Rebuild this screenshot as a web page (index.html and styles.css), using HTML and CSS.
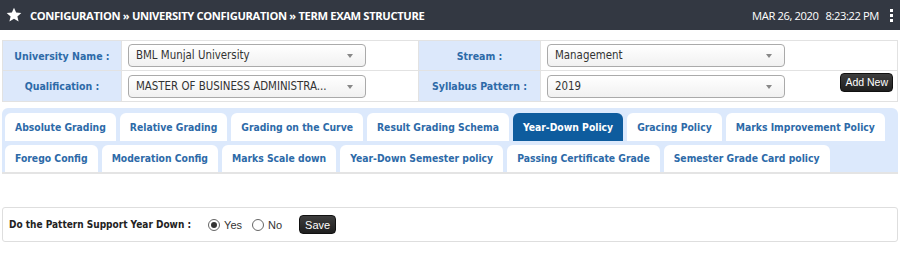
FILE: index.html
```html
<!DOCTYPE html>
<html lang="en">
  <head>
    <meta charset="UTF-8" />
    <title>Term Exam Structure</title>
    <link rel="stylesheet" href="styles.css">
  </head>
  <body>
    <div class="top-bar">
      <div class="crumbs">
        <svg class="star" viewBox="0 0 24 24" width="16" height="16">
          <path d="M12 1l3.2 7.2 7.8.7-5.9 5.2 1.8 7.7L12 17.8l-6.9 4 1.8-7.7L1 8.9l7.8-.7z" fill="#fff" />
        </svg>
        <span>CONFIGURATION » UNIVERSITY CONFIGURATION » TERM EXAM STRUCTURE</span>
      </div>
      <div class="clock">
        <span>MAR 26, 2020</span>
        <span>8:23:22 PM</span>
        <span class="kebab"><i></i><i></i><i></i></span>
      </div>
    </div>

    <div class="page">
      <div class="filter-grid">
        <div class="label">University Name :</div>
        <div class="field">
          <div class="select">BML Munjal University</div>
        </div>
        <div class="label">Stream :</div>
        <div class="field">
          <div class="select">Management</div>
        </div>

        <div class="label">Qualification :</div>
        <div class="field">
          <div class="select">MASTER OF BUSINESS ADMINISTRA...</div>
        </div>
        <div class="label">Syllabus Pattern :</div>
        <div class="field field-last">
          <div class="select">2019</div>
          <button class="btn-dark btn-add">Add New</button>
        </div>
      </div>

      <div class="tabs">
        <div class="tab-row">
          <a class="tab">Absolute Grading</a>
          <a class="tab">Relative Grading</a>
          <a class="tab">Grading on the Curve</a>
          <a class="tab">Result Grading Schema</a>
          <a class="tab active">Year-Down Policy</a>
          <a class="tab">Gracing Policy</a>
          <a class="tab">Marks Improvement Policy</a>
        </div>
        <div class="tab-row">
          <a class="tab">Forego Config</a>
          <a class="tab">Moderation Config</a>
          <a class="tab">Marks Scale down</a>
          <a class="tab">Year-Down Semester policy</a>
          <a class="tab">Passing Certificate Grade</a>
          <a class="tab">Semester Grade Card policy</a>
        </div>
      </div>

      <div class="panel">
        <span class="question">Do the Pattern Support Year Down :</span>
        <label class="radio"><span class="dot checked"></span>Yes</label>
        <label class="radio"><span class="dot"></span>No</label>
        <button class="btn-dark btn-save">Save</button>
      </div>
    </div>
  </body>
</html>
```

FILE: styles.css
```css
* {
  margin: 0;
  padding: 0;
  box-sizing: border-box;
}

body {
  font-family: "DejaVu Sans Condensed", "DejaVu Sans", sans-serif;
  font-size: 10.5px;
  background: #fff;
  color: #333;
}

.top-bar {
  height: 30px;
  background: #333842;
  color: #fff;
  display: flex;
  align-items: center;
  justify-content: space-between;
  padding: 0 7px 0 6px;
}

.crumbs {
  display: flex;
  align-items: center;
  gap: 8px;
  font-family: "Open Sans", sans-serif;
  font-weight: bold;
  font-size: 11.2px;
  letter-spacing: -0.35px;
}

.star {
  display: block;
}

.clock {
  display: flex;
  align-items: center;
  gap: 7px;
  font-family: "Open Sans", sans-serif;
  font-size: 11.2px;
  letter-spacing: -0.4px;
}

.kebab {
  display: flex;
  flex-direction: column;
  gap: 2px;
  margin-left: 4px;
}

.kebab i {
  display: block;
  width: 3px;
  height: 3px;
  background: #fff;
}

.page {
  padding: 10px 2px 0 2px;
}

.filter-grid {
  display: grid;
  grid-template-columns: 119px 297px 122px 1fr;
  grid-auto-rows: 30px;
  border: 1px solid #e2e2e2;
}

.label {
  background: #dce8fb;
  color: #2d6aa8;
  font-weight: bold;
  display: flex;
  align-items: center;
  justify-content: center;
  border-right: 1px solid #e2e2e2;
  border-bottom: 1px solid #e2e2e2;
}

.field {
  display: flex;
  align-items: center;
  padding-left: 6px;
  border-right: 1px solid #e2e2e2;
  border-bottom: 1px solid #e2e2e2;
}

.filter-grid > :nth-child(n+5) {
  border-bottom: none;
}

.filter-grid > :nth-child(4n) {
  border-right: none;
}

.select {
  position: relative;
  width: 238px;
  height: 23px;
  line-height: 21px;
  padding-left: 7px;
  border: 1px solid #aaa;
  border-radius: 4px;
  background: linear-gradient(#fff, #f1f1f1);
  font-size: 11.4px;
  color: #333;
}

.select::after {
  content: "";
  position: absolute;
  right: 12px;
  top: 9px;
  border-left: 3px solid transparent;
  border-right: 3px solid transparent;
  border-top: 4px solid #888;
}

.field-last {
  justify-content: space-between;
  padding-right: 4px;
}

.btn-dark {
  font-family: "Liberation Sans", Arial, sans-serif;
  font-size: 10.5px;
  color: #fff;
  border: 1px solid #111;
  border-radius: 4px;
  background: linear-gradient(#3e3e3e, #1f1f1f);
  cursor: pointer;
}

.btn-add {
  height: 19px;
  padding: 0 4px;
  margin-top: -8px;
}

.tabs {
  margin-top: 6px;
  background: #dce9fc;
  border-radius: 6px 6px 0 0;
  padding: 5px 15px 0 3px;
  border-bottom: 2px solid #e4e4e4;
  display: flex;
  flex-direction: column;
  gap: 4px;
}

.tab-row {
  display: flex;
  gap: 4px;
}

.tab {
  background: #fff;
  color: #2d6aa8;
  font-weight: bold;
  font-size: 10.3px;
  white-space: nowrap;
  height: 28px;
  line-height: 28px;
  padding: 0 10px;
  border-radius: 6px 6px 0 0;
  cursor: pointer;
}

.tab-row + .tab-row .tab {
  height: 27px;
  line-height: 27px;
}

.tab.active {
  background: #0e5c9e;
  color: #fff;
}

.panel {
  margin-top: 33px;
  height: 35px;
  border: 1px solid #dedede;
  border-radius: 3px;
  display: flex;
  align-items: center;
  padding-left: 6px;
}

.question {
  font-weight: bold;
  font-size: 10px;
  color: #222;
  margin-right: 17px;
}

.radio {
  display: flex;
  align-items: center;
  gap: 4px;
  font-family: "Liberation Sans", Arial, sans-serif;
  font-size: 11px;
  color: #333;
  margin-right: 10px;
}

.dot {
  width: 12px;
  height: 12px;
  border: 1px solid #666;
  border-radius: 50%;
  background: #fff;
  display: flex;
  align-items: center;
  justify-content: center;
}

.dot.checked::after {
  content: "";
  width: 6px;
  height: 6px;
  border-radius: 50%;
  background: #333;
}

.btn-save {
  height: 19px;
  padding: 0 5px;
  margin-left: 7px;
  font-size: 11px;
}
```
